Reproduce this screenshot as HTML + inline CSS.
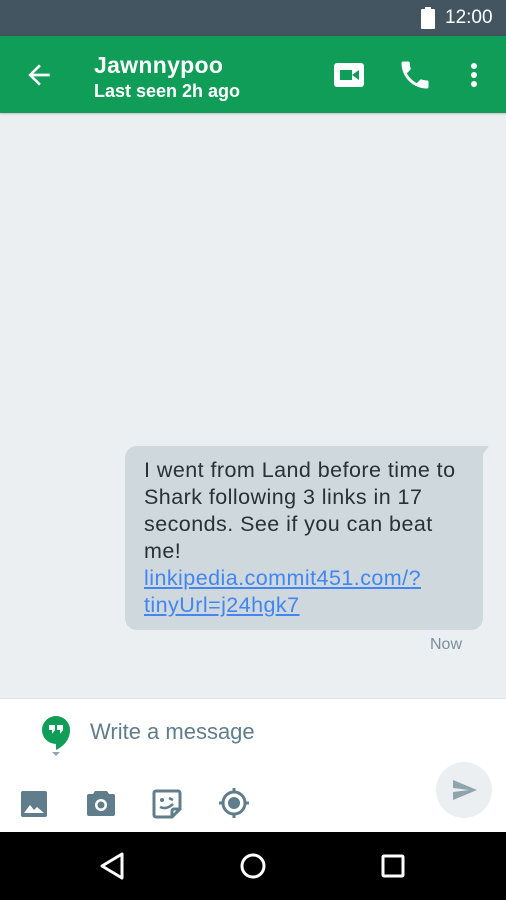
<!DOCTYPE html>
<html><head><style>
*{margin:0;padding:0;box-sizing:border-box}
body{width:506px;height:900px;overflow:hidden;font-family:"Liberation Sans",sans-serif;background:#eceff1;position:relative}
.abs{position:absolute}
</style></head><body>
<div class="abs" style="left:0;top:0;width:506px;height:36px;background:#425560"></div>
<svg class="abs" style="left:420px;top:7px" width="16" height="22"><rect x="5" y="0" width="6" height="3" fill="#fff"/><rect x="1" y="2" width="14" height="20" rx="1" fill="#fff"/></svg>
<div class="abs" style="left:445px;top:7px;color:#fff;font-size:19px">12:00</div>
<div class="abs" style="left:0;top:36px;width:506px;height:77px;background:#0f9d58;box-shadow:0 1px 2px rgba(0,0,0,.2)"></div>
<svg class="abs" style="left:23px;top:59px" width="32" height="32" viewBox="0 0 24 24"><path d="M20 11H7.8l5.6-5.6L12 4l-8 8 8 8 1.4-1.4L7.8 13H20z" fill="#fff"/></svg>
<div class="abs" style="left:94px;top:52px;color:#fff;font-size:23px;font-weight:bold;letter-spacing:0.3px">Jawnnypoo</div>
<div class="abs" style="left:94px;top:81px;color:#fff;font-size:18px;font-weight:bold">Last seen 2h ago</div>
<svg class="abs" style="left:334px;top:63px" width="30" height="24"><rect x="0" y="0" width="30" height="24" rx="3" fill="#fff"/><rect x="6" y="7" width="12" height="10" fill="#0f9d58"/><path d="M18 12l7-5v10z" fill="#0f9d58"/></svg>
<svg class="abs" style="left:397px;top:57px" width="36" height="36" viewBox="0 0 24 24"><path d="M6.6 10.8c1.4 2.8 3.8 5.1 6.6 6.6l2.2-2.2c.3-.3.7-.4 1-.2 1.1.4 2.3.6 3.6.6.6 0 1 .4 1 1V20c0 .6-.4 1-1 1C10.6 21 3 13.4 3 4c0-.6.4-1 1-1h3.5c.6 0 1 .4 1 1 0 1.3.2 2.5.6 3.6.1.3 0 .7-.2 1z" fill="#fff"/></svg>
<svg class="abs" style="left:469px;top:62px" width="10" height="26"><circle cx="5" cy="4" r="3" fill="#fff"/><circle cx="5" cy="13" r="3" fill="#fff"/><circle cx="5" cy="22" r="3" fill="#fff"/></svg>
<svg class="abs" style="left:125px;top:446px" width="366" height="184"><path d="M12 0H364L358 8V172a12 12 0 0 1-12 12H12A12 12 0 0 1 0 172V12A12 12 0 0 1 12 0z" fill="#cfd8dc"/></svg>
<div class="abs" style="left:144px;top:457px;width:345px;font-size:21.5px;letter-spacing:0.45px;line-height:27px;color:#263238;white-space:nowrap">I went from Land before time to<br>Shark following 3 links in 17<br>seconds. See if you can beat<br>me!<br><span style="color:#4285f4;text-decoration:underline">linkipedia.commit451.com/?<br>tinyUrl=j24hgk7</span></div>
<div class="abs" style="left:430px;top:636px;font-size:16px;color:#78909c">Now</div>
<div class="abs" style="left:0;top:698px;width:506px;height:134px;background:#fff;border-top:1px solid #e0e4e6"></div>
<svg class="abs" style="left:41px;top:715px" width="30" height="44"><path d="M15 1a14 14 0 1 0 0 28v6c6-3 14-9 14-20A14 14 0 0 0 15 1z" fill="#0f9d58"/><rect x="8" y="10" width="6" height="5" fill="#fff"/><rect x="16" y="10" width="6" height="5" fill="#fff"/><path d="M11 15v4l3-4zM19 15v4l3-4z" fill="#fff"/><path d="M11 37h8l-4 4z" fill="#90a4ae"/></svg>
<div class="abs" style="left:90px;top:719px;font-size:22px;color:#607d8b">Write a message</div>
<div class="abs" style="left:436px;top:762px;width:56px;height:56px;border-radius:50%;background:#eceff1"></div>
<svg class="abs" style="left:452px;top:779px" width="26" height="22" viewBox="0 0 26 22"><path d="M1 1l24 10L1 21v-8l16-2L1 9z" fill="#90a4ae"/></svg>
<svg class="abs" style="left:20px;top:790px" width="28" height="28"><rect x="1" y="1" width="26" height="26" rx="2" fill="#607d8b"/><path d="M4 23l6-8 4 5 3-3 7 6z" fill="#fff"/></svg>
<svg class="abs" style="left:86px;top:789px" width="30" height="28"><path d="M9 2h12l2 3h4a2 2 0 0 1 2 2v18a2 2 0 0 1-2 2H3a2 2 0 0 1-2-2V7a2 2 0 0 1 2-2h4z" fill="#607d8b"/><circle cx="15" cy="16" r="6" fill="#fff"/><circle cx="15" cy="16" r="3.5" fill="#607d8b"/></svg>
<svg class="abs" style="left:152px;top:789px" width="30" height="30"><path d="M4 2h22a2 2 0 0 1 2 2v16l-8 8H4a2 2 0 0 1-2-2V4a2 2 0 0 1 2-2z" fill="none" stroke="#607d8b" stroke-width="3"/><path d="M20 28v-6a2 2 0 0 1 2-2h6" fill="none" stroke="#607d8b" stroke-width="3"/><circle cx="10" cy="11" r="2" fill="#607d8b"/><path d="M17 9l4 2" stroke="#607d8b" stroke-width="2.5"/><path d="M8 18c4 2 9 1 13-3" fill="none" stroke="#607d8b" stroke-width="2.5"/></svg>
<svg class="abs" style="left:218px;top:787px" width="32" height="32"><circle cx="16" cy="16" r="11" fill="none" stroke="#607d8b" stroke-width="3"/><circle cx="16" cy="16" r="6" fill="#607d8b"/><path d="M16 1v5M16 26v5M1 16h5M26 16h5" stroke="#607d8b" stroke-width="3"/></svg>
<div class="abs" style="left:0;top:832px;width:506px;height:68px;background:#000"></div>
<svg class="abs" style="left:98px;top:851px" width="30" height="30"><path d="M24 3L4 15l20 12z" fill="none" stroke="#fff" stroke-width="3" stroke-linejoin="round"/></svg>
<svg class="abs" style="left:239px;top:852px" width="28" height="28"><circle cx="14" cy="14" r="11" fill="none" stroke="#fff" stroke-width="3"/></svg>
<svg class="abs" style="left:381px;top:854px" width="24" height="24"><rect x="2" y="2" width="20" height="20" rx="1" fill="none" stroke="#fff" stroke-width="3"/></svg>
</body></html>
